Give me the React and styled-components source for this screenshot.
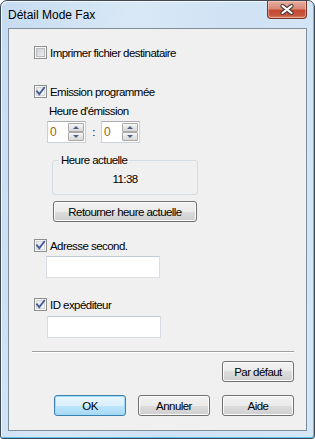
import React from 'react';
import styled, { createGlobalStyle } from 'styled-components';

const GlobalStyle = createGlobalStyle`
	html, body {
		margin: 0;
		padding: 0;
		background: #ffffff;
	}
	* {
		box-sizing: border-box;
	}
`;

const CheckBox = ({ checked }) => (
	<svg width="13" height="13" viewBox="0 0 13 13">
		<defs>
			<linearGradient id={checked ? 'cbOn' : 'cbOff'} x1="0" y1="0" x2="1" y2="1">
				<stop offset="0" stopColor={checked ? '#e4e6e9' : '#c9ccd1'} />
				<stop offset="1" stopColor={checked ? '#fbfbfb' : '#f2f2f2'} />
			</linearGradient>
		</defs>
		<rect x="0.5" y="0.5" width="12" height="12" fill="#f6f6f6" stroke="#8e8f8f" />
		<rect x="2.5" y="2.5" width="8" height="8" fill={`url(#${checked ? 'cbOn' : 'cbOff'})`} stroke={checked ? '#d2d4d7' : '#b9bcc0'} />
		{checked && (
			<path d="M3 6.3 L5.3 9.2 L10.2 2.8" fill="none" stroke="#4a5f97" strokeWidth="1.9" strokeLinecap="square" />
		)}
	</svg>
);

const CloseGlyph = () => (
	<svg width="14" height="11" viewBox="0 0 14 11">
		<path d="M2.5 2 L11.5 9 M11.5 2 L2.5 9" stroke="#4b3b38" strokeWidth="4.2" strokeLinecap="round" />
		<path d="M2.5 2 L11.5 9 M11.5 2 L2.5 9" stroke="#ffffff" strokeWidth="2.2" strokeLinecap="round" />
	</svg>
);

const CheckRow = ({ checked, label, mt }) => (
	<Row $mt={mt}>
		<CheckBox checked={checked} />
		<RowText>{label}</RowText>
	</Row>
);

const Spinner = ({ value }) => (
	<SpinBox>
		<SpinValue>{value}</SpinValue>
		<SpinCol>
			<SpinBtn><Arrow $up /></SpinBtn>
			<SpinBtn><Arrow /></SpinBtn>
		</SpinCol>
	</SpinBox>
);

const App = () => {
	return (
		<>
			<GlobalStyle />
			<Window>
				<TitleBar>
					<Title>Détail Mode Fax</Title>
					<CloseButton><CloseGlyph /></CloseButton>
				</TitleBar>
				<Client>
					<Form>
						<CheckRow mt={17} label="Imprimer fichier destinataire" />
						<CheckRow mt={26} checked label="Emission programmée" />
						<FieldLabel>Heure d'émission</FieldLabel>
						<SpinRow>
							<Spinner value="0" />
							<Colon>:</Colon>
							<Spinner value="0" />
						</SpinRow>
						<GroupBox>
							<Legend>Heure actuelle</Legend>
							<Clock>11:38</Clock>
						</GroupBox>
						<Button $w={144} $ml={19} $mt={6}>Retourner heure actuelle</Button>
						<CheckRow mt={17} checked label="Adresse second." />
						<TextBox $ml={12} $mt={4} />
						<CheckRow mt={20} checked label="ID expéditeur" />
						<TextBox $ml={13} $mt={5} />
					</Form>
					<Separator />
					<Footer>
						<ButtonRow $mt={8}>
							<Button>Par défaut</Button>
						</ButtonRow>
						<ButtonRow $mt={13}>
							<Button $default>OK</Button>
							<Button>Annuler</Button>
							<Button>Aide</Button>
						</ButtonRow>
					</Footer>
				</Client>
			</Window>
		</>
	);
};

export default App;

const Window = styled.div`
	width: 315px;
	height: 439px;
	display: flex;
	flex-direction: column;
	padding: 0 7px 7px 7px;
	border: 1px solid #3e4a57;
	border-radius: 7px 7px 3px 3px;
	background: linear-gradient(100deg, #c6dcf1 0%, #d9e8f6 35%, #cfe2f4 60%, #d6e7f6 100%);
	box-shadow: inset 1px 1px 0 rgba(255, 255, 255, 0.75), inset -1px -1px 0 #5bc2ec;
	font-family: "Liberation Sans", Arial, sans-serif;
	font-size: 11.5px;
	letter-spacing: -0.55px;
	color: #000000;
`;
const TitleBar = styled.div`
	height: 27px;
	flex: none;
	display: flex;
	justify-content: space-between;
	align-items: center;
`;
const Title = styled.div`
	font-size: 12px;
	letter-spacing: 0;
	color: #000000;
`;
const CloseButton = styled.div`
	align-self: flex-start;
	width: 40px;
	height: 18px;
	display: flex;
	align-items: center;
	justify-content: center;
	border: 1px solid #7a3427;
	border-top: none;
	border-radius: 0 0 4px 4px;
	background: linear-gradient(180deg, #e7ada0 0%, #d98a78 45%, #c4492f 55%, #c8583d 85%, #e08a6c 100%);
	box-shadow: inset 0 0 0 1px rgba(255, 220, 210, 0.45);
`;
const Client = styled.div`
	flex: 1;
	display: flex;
	flex-direction: column;
	border: 1px solid #7f8e9d;
	background: #f0f0f0;
`;
const Form = styled.div`
	display: flex;
	flex-direction: column;
	align-items: flex-start;
	padding-left: 25px;
`;
const Row = styled.div`
	display: flex;
	align-items: center;
	gap: 3px;
	height: 13px;
	line-height: 13px;
	margin-top: ${p => p.$mt}px;
	white-space: nowrap;
`;
const RowText = styled.span`
	padding-top: 1px;
`;
const FieldLabel = styled.div`
	margin: 6px 0 0 15px;
	line-height: 14px;
`;
const SpinRow = styled.div`
	display: flex;
	align-items: center;
	margin: 3px 0 0 13px;
`;
const SpinBox = styled.div`
	width: 39px;
	height: 22px;
	display: flex;
	justify-content: space-between;
	padding: 1px 1px 1px 0;
	border: 1px solid #c9d0d7;
	border-top-color: #abadb3;
	background: #ffffff;
`;
const SpinValue = styled.div`
	padding-left: 2px;
	font-size: 12px;
	line-height: 18px;
	color: #a0600f;
`;
const SpinCol = styled.div`
	width: 16px;
	display: flex;
	flex-direction: column;
`;
const SpinBtn = styled.div`
	flex: 1;
	display: flex;
	align-items: center;
	justify-content: center;
	border: 1px solid #a9a9a9;
	border-radius: 1px;
	background: linear-gradient(180deg, #f7f7f7 0%, #e6e6e6 50%, #d8d8d8 100%);
`;
const Arrow = styled.span`
	width: 0;
	height: 0;
	border-left: 3px solid transparent;
	border-right: 3px solid transparent;
	${p => p.$up ? 'border-bottom: 3px solid #4d6185;' : 'border-top: 3px solid #4d6185;'}
`;
const Colon = styled.div`
	width: 15px;
	text-align: center;
`;
const GroupBox = styled.fieldset`
	width: 146px;
	margin: 10px 0 0 18px;
	padding: 0 6px 8px 6px;
	border: 1px solid #d2dce3;
	border-radius: 3px;
	min-inline-size: 0;
`;
const Legend = styled.legend`
	padding: 0 2px;
	line-height: 14px;
`;
const Clock = styled.div`
	margin-top: 5px;
	line-height: 14px;
	text-align: center;
`;
const TextBox = styled.div`
	width: 114px;
	height: 22px;
	margin: ${p => p.$mt}px 0 0 ${p => p.$ml}px;
	border: 1px solid #d7dde3;
	border-top-color: #c3cad1;
	background: #ffffff;
`;
const Separator = styled.div`
	margin: 13px 12px 0 23px;
	height: 2px;
	border-top: 1px solid #a0a0a0;
	border-bottom: 1px solid #ffffff;
`;
const Footer = styled.div`
	display: flex;
	flex-direction: column;
	padding: 0 12px;
`;
const ButtonRow = styled.div`
	display: flex;
	justify-content: flex-end;
	gap: 12px;
	margin-top: ${p => p.$mt}px;
`;
const Button = styled.div`
	width: ${p => p.$w || 72}px;
	height: 21px;
	margin: ${p => p.$mt || 0}px 0 0 ${p => p.$ml || 0}px;
	display: flex;
	align-items: center;
	justify-content: center;
	border: 1px solid ${p => p.$default ? '#3c7fb1' : '#707070'};
	border-radius: 3px;
	background: ${p => p.$default
		? 'linear-gradient(180deg, #eaf6fd 0%, #d9f0fc 50%, #bee6fd 50%, #a7d9f5 100%)'
		: 'linear-gradient(180deg, #f2f2f2 0%, #ebebeb 50%, #dddddd 50%, #cfcfcf 100%)'};
	box-shadow: inset 0 0 0 1px ${p => p.$default ? '#9fdcf7' : '#fcfcfc'};
	white-space: nowrap;
`;
